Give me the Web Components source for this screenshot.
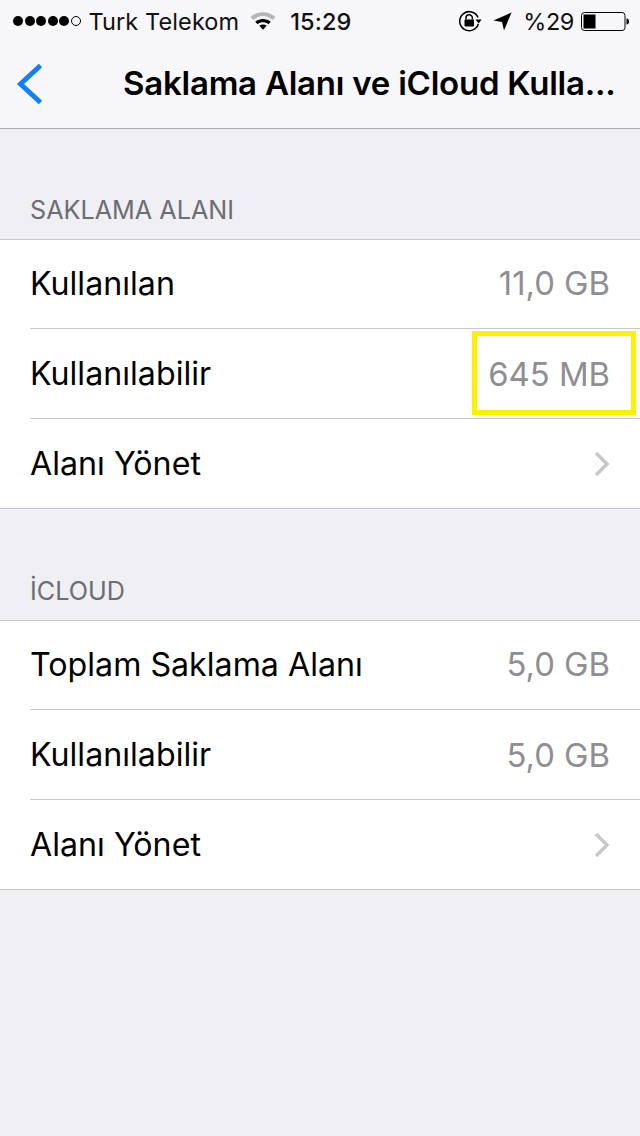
<!DOCTYPE html>
<html lang="tr">
<head>
<meta charset="utf-8">
<title>Saklama Alanı ve iCloud Kullanımı</title>
<style>
  html, body { margin: 0; height: 100%; background: #efeff4; }
  body { font-family: Inter, "Liberation Sans", sans-serif; display: flex; flex-direction: column; }
</style>
</head>
<body>
<ios-header title="Saklama Alanı ve iCloud Kulla..."></ios-header>

<settings-section label="SAKLAMA ALANI" style="--gap: 110px">
  <settings-row label="Kullanılan" value="11,0 GB" first></settings-row>
  <settings-row label="Kullanılabilir" value="645 MB" highlight></settings-row>
  <settings-row label="Alanı Yönet" chevron></settings-row>
</settings-section>

<settings-section label="İCLOUD" style="--gap: 111px">
  <settings-row label="Toplam Saklama Alanı" value="5,0 GB" first></settings-row>
  <settings-row label="Kullanılabilir" value="5,0 GB"></settings-row>
  <settings-row label="Alanı Yönet" chevron></settings-row>
</settings-section>

<script>
class IosHeader extends HTMLElement {
    constructor() {
        super();
        this.attachShadow({ mode: 'open' });
        this.shadowRoot.innerHTML = `
            <style>
                :host {
                    display: block;
                    background: #f7f7f9;
                    border-bottom: 1px solid #a9a9ae;
                    color: #000;
                }
                #status {
                    height: 42px;
                    display: flex;
                    align-items: center;
                    padding: 0 0 0 13px;
                    font-size: 23.5px;
                    letter-spacing: .1px;
                    white-space: nowrap;
                    color: #111;
                }
                #dots { display: flex; gap: 1.5px; margin-right: 8px; }
                #dots i { width: 10px; height: 10px; border-radius: 50%; background: #000; box-sizing: border-box; }
                #dots i.off { background: none; border: 1px solid #000; }
                #wifi { margin-left: 11px; }
                #time { margin-left: 14px; font-weight: 500; }
                #right { margin-left: auto; display: flex; align-items: center; padding-right: 10px; }
                #arrow { margin-left: 11px; }
                #percent { margin-left: 11px; letter-spacing: -.4px; }
                #battery { margin-left: 7px; }
                #bar {
                    height: 86px;
                    box-sizing: border-box;
                    padding-bottom: 2px;
                    display: grid;
                    grid-template-columns: 123px 1fr;
                    align-items: center;
                }
                #back { padding: 0 0 0 16px; display: flex; }
                #title {
                    font-size: 33px;
                    font-weight: 600;
                    letter-spacing: -.23px;
                    white-space: nowrap;
                    padding-bottom: 2px;
                }
            </style>
            <div id="status">
                <div id="dots"><i></i><i></i><i></i><i></i><i></i><i class="off"></i></div>
                <span>Turk Telekom</span>
                <svg id="wifi" width="26" height="20" viewBox="0 0 26 20">
                    <path d="M.5 6 C7.5 -.5 18.5 -.5 25.5 6 L22.6 9 C16.5 3.8 9.5 3.8 3.4 9 Z" fill="#b5b5b8"/>
                    <path d="M5.2 10.8 C10 7 16 7 20.8 10.8 L18.4 13.2 C15 10.6 11 10.6 7.6 13.2 Z" fill="#000"/>
                    <path d="M9.3 14.8 C11.5 13.2 14.5 13.2 16.7 14.8 L13 18.8 Z" fill="#000"/>
                </svg>
                <span id="time">15:29</span>
                <div id="right">
                    <svg width="24" height="22" viewBox="0 0 24 22">
                        <path d="M20 7.5 A9.5 9.5 0 1 0 20.3 14" fill="none" stroke="#000" stroke-width="1.5"/>
                        <path d="M17.6 9.5 L23.6 9.5 L20.6 13.5 Z" fill="#000"/>
                        <path d="M8 9.5 V8 a3.2 3.2 0 0 1 6.4 0 V9.5" fill="none" stroke="#000" stroke-width="1.5"/>
                        <rect x="6.5" y="9.5" width="9.5" height="7" rx="1" fill="#000"/>
                    </svg>
                    <svg id="arrow" width="19" height="19" viewBox="0 0 19 19">
                        <path d="M18.5 .5 L11 18.5 L9 10 L.5 8.5 Z" fill="#000"/>
                    </svg>
                    <span id="percent">%29</span>
                    <svg id="battery" width="49" height="19" viewBox="0 0 49 19">
                        <rect x=".5" y=".5" width="43.5" height="18" rx="3" fill="none" stroke="#000"/>
                        <rect x="2.5" y="2.5" width="12" height="14" fill="#000"/>
                        <path d="M45.5 6.5 C47.5 6.7 48 8 48 9.5 C48 11 47.5 12.3 45.5 12.5 Z" fill="#000"/>
                    </svg>
                </div>
            </div>
            <div id="bar">
                <div id="back">
                    <svg width="27" height="42" viewBox="0 0 27 42">
                        <path d="M24.5 2.5 L4.5 21 L24.5 39.5" fill="none" stroke="#147efb" stroke-width="5"/>
                    </svg>
                </div>
                <div id="title"></div>
            </div>
        `;
    }

    connectedCallback() {
        this.shadowRoot.querySelector('#title').textContent = this.getAttribute('title');
    }
}

class SettingsSection extends HTMLElement {
    constructor() {
        super();
        this.attachShadow({ mode: 'open' });
        this.shadowRoot.innerHTML = `
            <style>
                :host { display: block; }
                header {
                    height: var(--gap, 110px);
                    box-sizing: border-box;
                    display: flex;
                    align-items: flex-end;
                    padding: 0 0 14px 30px;
                    font-size: 25.2px;
                    color: #6d6d72;
                }
                #rows {
                    background: #fff;
                    border-top: 1px solid #c8c7cc;
                    border-bottom: 1px solid #c8c7cc;
                }
            </style>
            <header></header>
            <div id="rows"><slot></slot></div>
        `;
    }

    connectedCallback() {
        this.shadowRoot.querySelector('header').textContent = this.getAttribute('label');
    }
}

class SettingsRow extends HTMLElement {
    constructor() {
        super();
        this.attachShadow({ mode: 'open' });
        this.shadowRoot.innerHTML = `
            <style>
                :host { display: block; position: relative; padding-left: 30px; }
                :host([first]) #row { height: 88px; border-top: 0; padding-bottom: 2px; box-sizing: border-box; }
                #row {
                    height: 89px;
                    border-top: 1px solid #c8c7cc;
                    display: flex;
                    align-items: center;
                    justify-content: space-between;
                    padding-right: 30px;
                    font-size: 32.2px;
                    color: #000;
                }
                #value { color: #8e8e93; font-size: 32.8px; }
                svg { display: none; }
                :host([chevron]) svg { display: block; }
                #mark {
                    display: none;
                    position: absolute;
                    left: 472px;
                    top: 3px;
                    width: 164px;
                    height: 84px;
                    box-sizing: border-box;
                    border: 5px solid #fdf000;
                }
                :host([highlight]) #mark { display: block; }
            </style>
            <div id="row">
                <span id="label"></span>
                <span id="value"></span>
                <svg width="16" height="26" viewBox="0 0 16 26">
                    <path d="M2 2 L13 13 L2 24" fill="none" stroke="#c7c7cc" stroke-width="3.4"/>
                </svg>
            </div>
            <div id="mark"></div>
        `;
    }

    connectedCallback() {
        this.shadowRoot.querySelector('#label').textContent = this.getAttribute('label');
        this.shadowRoot.querySelector('#value').textContent = this.getAttribute('value') || '';
    }
}

customElements.define('ios-header', IosHeader);
customElements.define('settings-section', SettingsSection);
customElements.define('settings-row', SettingsRow);
</script>
</body>
</html>
